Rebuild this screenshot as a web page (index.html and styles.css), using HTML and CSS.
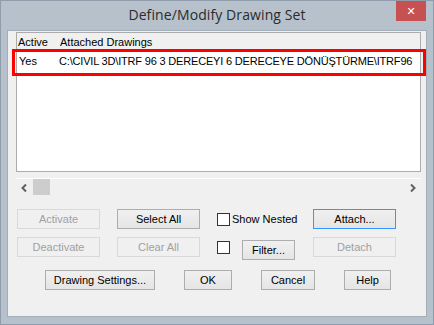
FILE: index.html
```html
<!DOCTYPE html>
<html lang="en">
<head>
    <meta charset="UTF-8">
    <title>Define/Modify Drawing Set</title>
    <link rel="stylesheet" href="styles.css">
</head>
<body>
    <div class="window">
        <!-- Barra de título -->
        <div class="titlebar">
            <span></span>
            <span class="title">Define/Modify Drawing Set</span>
            <button class="close">&#x2715;</button>
        </div>

        <div class="content">
            <!-- Lista de desenhos -->
            <div class="list">
                <div class="list-head">
                    <span class="col-active">Active</span>
                    <span class="col-path">Attached Drawings</span>
                </div>
                <div class="list-row">
                    <span class="col-active">Yes</span>
                    <span class="col-path path">C:\CIVIL 3D\ITRF 96 3 DERECEYI 6 DERECEYE DÖNÜŞTÜRME\ITRF96</span>
                    <div class="highlight"></div>
                </div>
            </div>

            <!-- Barra de rolagem horizontal -->
            <div class="hscroll">
                <span class="arrow">
                    <svg width="7" height="8" viewBox="0 0 7 8"><path d="M5 0.5 L1.5 4 L5 7.5" fill="none" stroke="#606060" stroke-width="2"/></svg>
                </span>
                <span class="thumb"></span>
                <span class="track"></span>
                <span class="arrow">
                    <svg width="7" height="8" viewBox="0 0 7 8"><path d="M2 0.5 L5.5 4 L2 7.5" fill="none" stroke="#606060" stroke-width="2"/></svg>
                </span>
            </div>

            <!-- Botões de ação -->
            <div class="actions">
                <button class="btn disabled">Activate</button>
                <button class="btn">Select All</button>
                <label class="check"><span class="box"></span>Show Nested</label>
                <button class="btn focus">Attach...</button>

                <button class="btn disabled">Deactivate</button>
                <button class="btn disabled">Clear All</button>
                <div class="filter-cell">
                    <span class="box"></span>
                    <button class="btn filter">Filter...</button>
                </div>
                <button class="btn disabled">Detach</button>
            </div>

            <div class="footer">
                <button class="btn settings">Drawing Settings...</button>
                <button class="btn ok">OK</button>
                <button class="btn cancel">Cancel</button>
                <button class="btn help">Help</button>
            </div>
        </div>
    </div>
</body>
</html>
```

FILE: styles.css
```css
/* Página */
body {
    margin: 0;
    font-family: "Liberation Sans", Arial, sans-serif;
    font-size: 11px;
    color: #000;
}

/* Janela */
.window {
    width: 434px;
    height: 325px;
    box-sizing: border-box;
    background-color: #b6c1cc; /* Moldura */
    border: 1px solid #8e9cab;
    padding: 0 6px 7px 6px;
    display: flex;
    flex-direction: column;
}

/* Barra de título */
.titlebar {
    height: 29px;
    display: grid;
    grid-template-columns: 1fr auto 1fr;
    align-items: start;
}

.title {
    font-family: "Open Sans", sans-serif;
    font-size: 14px;
    color: #2b2b2b;
    margin-top: 4px;
    letter-spacing: 0.1px;
}

.close {
    justify-self: end;
    margin-right: 1px;
    width: 30px;
    height: 20px;
    border: none;
    padding: 0;
    background-color: #c75050;
    color: #fff;
    font-size: 11px;
    font-weight: bold;
    font-family: "DejaVu Sans", sans-serif;
}

/* Área do conteúdo */
.content {
    flex: 1;
    background-color: #f0f0f0;
    border: 1px solid #a3aebb;
    padding: 1px 0 0 8px;
}

/* Lista */
.list {
    width: 405px;
    height: 140px;
    box-sizing: border-box;
    border: 1px solid #acacac;
    background-color: #fff;
}

.list-head {
    height: 18px;
    display: flex;
    align-items: center;
    background-color: #f0f0f0;
}

.list-row {
    position: relative;
    height: 19px;
    display: flex;
    align-items: center;
    white-space: nowrap;
}

.col-active {
    width: 42px;
    padding-left: 1px;
    flex-shrink: 0;
}

.list-row .col-active {
    padding-left: 2px;
    width: 40px;
}

.path {
    letter-spacing: -0.18px;
}

/* Destaque vermelho */
.highlight {
    position: absolute;
    left: -5px;
    top: -2px;
    width: 414px;
    height: 27px;
    box-sizing: border-box;
    border: 3px solid #ff0000;
}

/* Barra de rolagem */
.hscroll {
    width: 405px;
    height: 17px;
    margin-top: 6px;
    border-top: 1px solid #fff;
    display: flex;
    align-items: center;
}

.arrow {
    width: 17px;
    display: flex;
    justify-content: center;
}

.thumb {
    width: 17px;
    height: 16px;
    background-color: #cdcdcd;
    align-self: flex-start;
}

.track {
    flex: 1;
}

/* Botões */
.btn {
    height: 20px;
    box-sizing: border-box;
    border: 1px solid #adadad;
    background: linear-gradient(#f0f0f0, #e5e5e5);
    font-family: "Liberation Sans", Arial, sans-serif;
    font-size: 11px;
    color: #000;
    padding: 0;
}

.btn.disabled {
    border-color: #d9d9d9;
    background: #f0f0f0;
    color: #a0a0a0;
}

.btn.focus {
    border-color: #3399ff;
}

.actions {
    margin-top: 13px;
    padding-left: 1px;
    display: grid;
    grid-template-columns: 83px 83px 79px 83px;
    grid-auto-rows: 20px;
    column-gap: 17px;
    row-gap: 8px;
}

.check {
    display: flex;
    align-items: center;
    gap: 2px;
    white-space: nowrap;
}

.box {
    width: 13px;
    height: 13px;
    box-sizing: border-box;
    border: 1px solid #333;
    background-color: #fff;
    flex-shrink: 0;
}

.filter-cell {
    display: flex;
    align-items: center;
    gap: 12px;
}

.filter {
    width: 53px;
    margin-top: 5px;
}

.footer {
    margin-top: 13px;
    padding-left: 29px;
    display: flex;
    gap: 29px;
}

.settings { width: 110px; }
.ok { width: 48px; }
.cancel { width: 54px; }
.help { width: 47px; }
```
